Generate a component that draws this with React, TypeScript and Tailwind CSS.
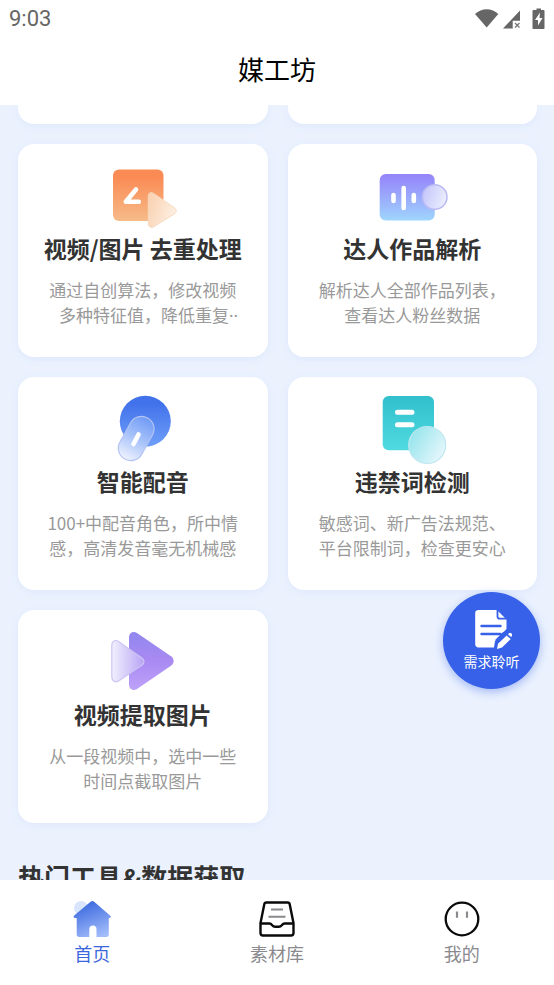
import type { ReactNode } from "react";

type Tool = {
  title: string;
  lines: string[];
  icon: ReactNode;
  clipped?: boolean;
};

const TOOLS: Tool[] = [
  {
    title: "视频/图片 去重处理",
    lines: ["通过自创算法，修改视频", "\u00a0\u00a0\u00a0多种特征值，降低重复"],
    icon: <DedupeIcon />,
    clipped: true,
  },
  {
    title: "达人作品解析",
    lines: ["解析达人全部作品列表，", "查看达人粉丝数据"],
    icon: <AnalyzeIcon />,
  },
  {
    title: "智能配音",
    lines: ["100+中配音角色，所中情", "感，高清发音毫无机械感"],
    icon: <VoiceIcon />,
  },
  {
    title: "违禁词检测",
    lines: ["敏感词、新广告法规范、", "平台限制词，检查更安心"],
    icon: <WordCheckIcon />,
  },
  {
    title: "视频提取图片",
    lines: ["从一段视频中，选中一些", "时间点截取图片"],
    icon: <ExtractIcon />,
  },
];

function DedupeIcon() {
  return (
    <svg viewBox="0 0 80 80" className="size-20" aria-hidden="true">
      <defs>
        <linearGradient id="dedupe-a" x1="0" y1="0" x2="0" y2="1">
          <stop offset="0.15" stopColor="#fa8b55" />
          <stop offset="1" stopColor="#f6bb89" />
        </linearGradient>
        <linearGradient id="dedupe-b" x1="0" y1="0" x2="1" y2="0.4">
          <stop offset="0" stopColor="#f9cfae" />
          <stop offset="1" stopColor="#fdeee0" />
        </linearGradient>
      </defs>
      <rect x="10" y="13.5" width="50.5" height="51.5" rx="6" fill="url(#dedupe-a)" />
      <path d="M33 33.500 22.800 45.800h13" fill="none" stroke="#fff" strokeWidth="4.600" strokeLinecap="round" strokeLinejoin="round" />
      <path
        d="M45.3 40c0-3 2.600-4.200 5-2.800l20.800 14.300c2.800 2 2.800 5 0 6.600L50.800 70.800c-2.600 1.600-5.500 0-5.500-3z"
        fill="url(#dedupe-b)"
        stroke="#f8d9bf"
        strokeWidth="1"
      />
    </svg>
  );
}

function AnalyzeIcon() {
  return (
    <svg viewBox="0 0 80 80" className="size-20" aria-hidden="true">
      <defs>
        <linearGradient id="analyze-a" x1="0" y1="0" x2="0" y2="1">
          <stop offset="0" stopColor="#9583fa" />
          <stop offset="0.5" stopColor="#9aaafb" />
          <stop offset="1" stopColor="#9fd6fd" />
        </linearGradient>
        <linearGradient id="analyze-b" x1="0" y1="0" x2="1" y2="0.3">
          <stop offset="0" stopColor="#c1c3fb" />
          <stop offset="1" stopColor="#e9ebfe" />
        </linearGradient>
      </defs>
      <rect x="7.700" y="18" width="55" height="46.500" rx="6" fill="url(#analyze-a)" />
      <path d="M21.500 39v6M31.700 32v20M41.800 39v6" stroke="#fff" strokeWidth="4.600" strokeLinecap="round" />
      <circle cx="62.700" cy="41" r="12.300" fill="url(#analyze-b)" stroke="#b9b9f3" strokeWidth="1.500" />
    </svg>
  );
}

function VoiceIcon() {
  return (
    <svg viewBox="0 0 80 80" className="size-20" aria-hidden="true">
      <defs>
        <linearGradient id="voice-a" x1="0" y1="0" x2="0" y2="1">
          <stop offset="0.15" stopColor="#4272eb" />
          <stop offset="1" stopColor="#70a0f8" />
        </linearGradient>
        <linearGradient id="voice-b" x1="0" y1="0" x2="0" y2="1">
          <stop offset="0" stopColor="#6f9af5" />
          <stop offset="0.5" stopColor="#a8c3fa" />
          <stop offset="1" stopColor="#eef1fe" />
        </linearGradient>
      </defs>
      <circle cx="42.300" cy="32.300" r="25.500" fill="url(#voice-a)" />
      <rect
        x="20.700"
        y="26"
        width="25"
        height="47"
        rx="12.500"
        transform="rotate(29 33.200 49.500)"
        fill="url(#voice-b)"
        stroke="#b3c3f3"
        strokeWidth="1.200"
      />
      <path d="m35.500 45.500-5 9.500" stroke="#fff" strokeWidth="4.600" strokeLinecap="round" />
    </svg>
  );
}

function WordCheckIcon() {
  return (
    <svg viewBox="0 0 80 80" className="size-20" aria-hidden="true">
      <defs>
        <linearGradient id="word-a" x1="0" y1="0" x2="0" y2="1">
          <stop offset="0" stopColor="#31bfcd" />
          <stop offset="1" stopColor="#50dae0" />
        </linearGradient>
        <linearGradient id="word-b" x1="0" y1="0" x2="1" y2="0.6">
          <stop offset="0" stopColor="#8be2ea" />
          <stop offset="1" stopColor="#e2f6fb" />
        </linearGradient>
      </defs>
      <rect x="10.700" y="7" width="51.300" height="54.300" rx="6" fill="url(#word-a)" />
      <path d="M25.500 23.200h14.500M25.500 35.800h14.500" stroke="#fff" strokeWidth="5" strokeLinecap="round" />
      <circle cx="55.200" cy="56" r="18.500" fill="url(#word-b)" stroke="#c0e6f0" strokeWidth="1.200" />
    </svg>
  );
}

function ExtractIcon() {
  return (
    <svg viewBox="0 0 80 80" className="size-20" aria-hidden="true">
      <defs>
        <linearGradient id="extract-a" x1="0" y1="0" x2="0" y2="1">
          <stop offset="0" stopColor="#9187ee" />
          <stop offset="0.5" stopColor="#a98af2" />
          <stop offset="1" stopColor="#bda2f8" />
        </linearGradient>
        <linearGradient id="extract-b" x1="0" y1="0" x2="1" y2="0">
          <stop offset="0" stopColor="#f1f0fd" />
          <stop offset="1" stopColor="#b8a4f5" />
        </linearGradient>
      </defs>
      <path
        d="M26 15.500c0-4.500 4-7 8-4.500L68 34.300c3.500 2.400 3.500 7 0 9.400L34 67c-4 2.500-8 0-8-4.500z"
        fill="url(#extract-a)"
      />
      <path
        d="M8.800 23c0-4 3.600-5.600 6.800-3.600L38.800 36c3 2.200 3 5 0 7.200L15.600 59c-3.200 2-6.800 0-6.800-4z"
        fill="url(#extract-b)"
        stroke="#cdc4f4"
        strokeWidth="1.200"
      />
    </svg>
  );
}

function StatusIcons() {
  return (
    <svg viewBox="0 0 72 22" className="h-[22px] w-[72px]" aria-hidden="true">
      <path d="M0 6C6.500-.3 17-.3 23.300 6L11.700 19.500z" fill="#666" />
      <path d="M45 2.500v10.300h-7.300V20.500H28z" fill="#666" />
      <path d="m40 15 4.500 4.500m0-4.500L40 19.500" stroke="#777" strokeWidth="1.300" />
      <path d="M58.500 2h3V.5h4.500V2h2.500c.7 0 1 .5 1 1v17c0 .6-.4 1-1 1h-10c-.6 0-1-.4-1-1V3c0-.5.400-1 1-1z" fill="#666" />
      <path d="m65 4.500-5 7.500h3v5.500l4.500-7.500h-3z" fill="#fff" />
    </svg>
  );
}

function HomeIcon() {
  return (
    <svg viewBox="0 0 40 40" className="size-10" aria-hidden="true">
      <defs>
        <linearGradient id="home-a" x1="0.300" y1="0" x2="0.700" y2="1">
          <stop offset="0" stopColor="#3866dd" />
          <stop offset="1" stopColor="#a3bdfb" />
        </linearGradient>
      </defs>
      <circle cx="9" cy="9" r="7" fill="#d9e5fc" />
      <path
        d="M18.900 2.500c1-.8 2-.8 3 0l16.400 14.200c1 1 .6 2.300-.8 2.300H36.800v16.500c0 1.500-.8 2.500-2.500 2.500H24.500V30c0-2.200-1.300-3.500-3.500-3.500S17.300 27.800 17.300 30v8H7.200c-1.700 0-2.500-1-2.500-2.500V19H3c-1.400 0-1.800-1.500-.8-2.500z"
        fill="url(#home-a)"
      />
    </svg>
  );
}

function LibraryIcon() {
  return (
    <svg viewBox="0 0 40 40" className="size-10" fill="none" aria-hidden="true">
      <path
        d="M9.300 3.500h21.400c1.200 0 1.800.6 2 1.700L36.500 24v10c0 1.600-.9 2.500-2.500 2.500H6c-1.600 0-2.500-.9-2.500-2.500V24L7.300 5.200c.2-1.100.8-1.700 2-1.700z"
        stroke="#0a0a0a"
        strokeWidth="2.400"
      />
      <path d="M3.500 24.500h9c1.500 0 1.800.6 2.700 1.800.8 1 1.500 1.500 3 1.500h3.600c1.500 0 2.200-.5 3-1.500.9-1.200 1.200-1.800 2.700-1.800h9" stroke="#0a0a0a" strokeWidth="2.400" />
      <path d="M14 10.500h12M11.500 17.800h17" stroke="#8a8a8e" strokeWidth="2" />
    </svg>
  );
}

function MineIcon() {
  return (
    <svg viewBox="0 0 40 40" className="size-10" fill="none" aria-hidden="true">
      <circle cx="20" cy="20" r="16.300" stroke="#0a0a0a" strokeWidth="2.300" />
      <path d="M15 12.500v6.200M25 12.500v6.200" stroke="#8a8a8e" strokeWidth="2.200" />
    </svg>
  );
}

function FeedbackIcon() {
  return (
    <svg viewBox="0 0 40 42" className="h-[42px] w-10" aria-hidden="true">
      <path d="M6.500 2H25l9.500 9.500V21L23 33l-1 6.500H6.500c-2 0-3.300-1.200-3.300-3.200V5.200C3.200 3.200 4.500 2 6.500 2z" fill="#fff" />
      <path d="M25.500 2v6.500c0 1.500.8 2.200 2.200 2.200h7" fill="none" stroke="#3661e8" strokeWidth="1.800" />
      <path d="M9.500 18h19M9.500 26h19" stroke="#3661e8" strokeWidth="2.400" strokeLinecap="round" />
      <path d="m26.500 35 8-8" stroke="#3661e8" strokeWidth="9" />
      <path d="m25 41 1-5.200 8.700-8.300 4 3.500-8.700 8.500zM36 26.300l1-1c.7-.7 1.500-.7 2.200 0l.8.8c.6.700.6 1.400 0 2l-1 1z" fill="#fff" />
    </svg>
  );
}

function ToolCard({ title, lines, icon, clipped }: Tool) {
  return (
    <a
      href="#"
      className="flex h-[213px] flex-col items-center rounded-2xl bg-white pt-3 text-center shadow-[0_2px_8px_rgba(90,130,230,0.08)]"
    >
      {icon}
      <h2 className="text-[23px] leading-6 font-bold whitespace-nowrap text-[#333]">{title}</h2>
      <p className="mt-[17px] text-[17px] leading-[25px] whitespace-nowrap text-[#999]">
        {lines.map((line, i) => (
          <span key={line} className="block">
            {line}
            {clipped && i === lines.length - 1 ? (
              <span className="font-['Noto_Sans',sans-serif]">··</span>
            ) : null}
          </span>
        ))}
      </p>
    </a>
  );
}

const TABS = [
  { label: "首页", icon: <HomeIcon />, active: true },
  { label: "素材库", icon: <LibraryIcon />, active: false },
  { label: "我的", icon: <MineIcon />, active: false },
];

export default function App() {
  return (
    <div className="relative flex h-screen flex-col overflow-hidden bg-[#ebf2fe] font-['Noto_Sans_CJK_SC',sans-serif]">
      <header className="shrink-0 bg-white pb-[17px]">
        <div className="flex h-[38px] items-center justify-between pr-[7px] pl-[9px]">
          <span className="font-[Roboto,sans-serif] text-[22px] leading-6 text-[#666]">9:03</span>
          <StatusIcons />
        </div>
        <h1 className="pt-3 text-center text-[26px] leading-[38px] text-black">媒工坊</h1>
      </header>

      <main className="min-h-0 flex-1 overflow-hidden pr-[17px] pl-[18px]">
        <div className="grid grid-cols-2 gap-5">
          <div className="h-[19px] rounded-b-2xl bg-white shadow-[0_2px_8px_rgba(90,130,230,0.08)]" />
          <div className="h-[19px] rounded-b-2xl bg-white shadow-[0_2px_8px_rgba(90,130,230,0.08)]" />
          {TOOLS.map((tool) => (
            <ToolCard key={tool.title} {...tool} />
          ))}
        </div>
        <h2 className="mt-[34px] text-[26px] leading-10 font-bold text-[#333]">热门工具&amp;数据获取</h2>
      </main>

      <button
        type="button"
        className="absolute right-[14px] bottom-[296px] flex size-[97px] flex-col items-center rounded-full bg-[#3661e8] pt-4 text-white shadow-[0_3px_10px_rgba(54,97,232,0.4)]"
      >
        <FeedbackIcon />
        <span className="text-sm leading-[22px]">需求聆听</span>
      </button>

      <nav className="grid h-[105px] shrink-0 grid-cols-3 bg-white pt-[19px]">
        {TABS.map((tab) => (
          <a
            key={tab.label}
            href="#"
            className={
              tab.active
                ? "flex flex-col items-center text-[18px] leading-7 text-[#3b67dc]"
                : "flex flex-col items-center text-[18px] leading-7 text-[#8a8a8e]"
            }
          >
            {tab.icon}
            {tab.label}
          </a>
        ))}
      </nav>
    </div>
  );
}
